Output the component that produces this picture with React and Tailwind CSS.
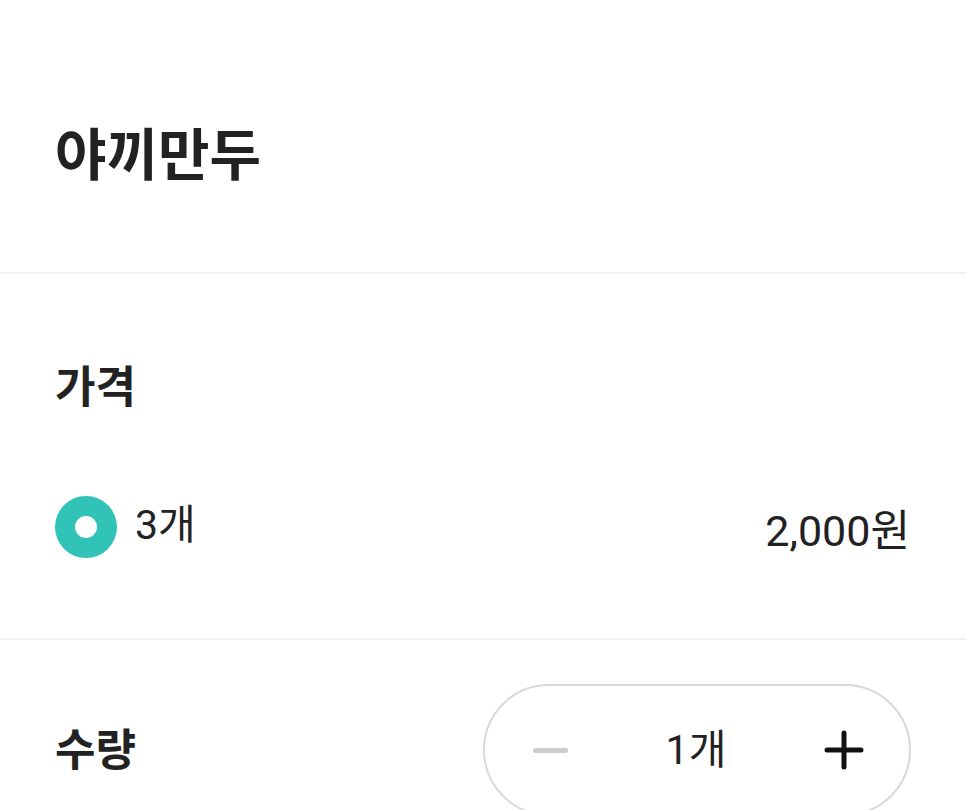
import React, { useState } from "react";

export default function App() {
  const [count, setCount] = useState(1);

  return (
    <div
      className="w-[966px] h-[810px] overflow-hidden bg-white text-[#222222]"
      style={{ fontFamily: "Roboto, 'Noto Sans CJK KR', sans-serif" }}
    >
      {/* Title */}
      <div className="px-[55px] pt-[128px] pb-[88px]">
        <h1 className="text-[56px] leading-none font-bold">야끼만두</h1>
      </div>
      <div className="h-[2px] bg-[#f2f2f2]" />

      {/* Price */}
      <div className="px-[55px] pt-[92px] pb-[80px]">
        <h2 className="text-[44px] leading-none font-bold">가격</h2>
        <div className="mt-[86px] flex items-center justify-between h-[62px]">
          <label className="flex items-center gap-[18px]">
            <span className="w-[62px] h-[62px] rounded-full bg-[#31c3b8] flex items-center justify-center">
              <span className="w-[22px] h-[22px] rounded-full bg-white" />
            </span>
            <span className="text-[41px] leading-none -mt-[4px]">3개</span>
          </label>
          <span className="text-[43px] leading-none mr-[1px] mt-[8px]">2,000원</span>
        </div>
      </div>
      <div className="h-[2px] bg-[#f2f2f2]" />

      {/* Quantity */}
      <div className="pl-[55px] pr-[55px] pt-[44px] flex items-center justify-between">
        <h2 className="text-[44px] leading-none font-bold mt-[2px]">수량</h2>
        <div className="w-[428px] h-[132px] rounded-full border-2 border-[#d9d9d9] flex items-center justify-between pl-[47px] pr-[45px]">
          <button
            onClick={() => setCount((c) => Math.max(1, c - 1))}
            className="w-[36px] h-[36px] flex items-center justify-center"
          >
            <span className="block w-[35px] h-[5px] rounded-full bg-[#cccccc]" />
          </button>
          <span className="text-[41px] leading-none">{count}개</span>
          <button
            onClick={() => setCount((c) => c + 1)}
            className="w-[40px] h-[40px] flex items-center justify-center"
          >
            <svg width="40" height="40" viewBox="0 0 40 40">
              <path d="M20 3v34M3 20h34" stroke="#111" strokeWidth="5" strokeLinecap="round" />
            </svg>
          </button>
        </div>
      </div>
    </div>
  );
}
